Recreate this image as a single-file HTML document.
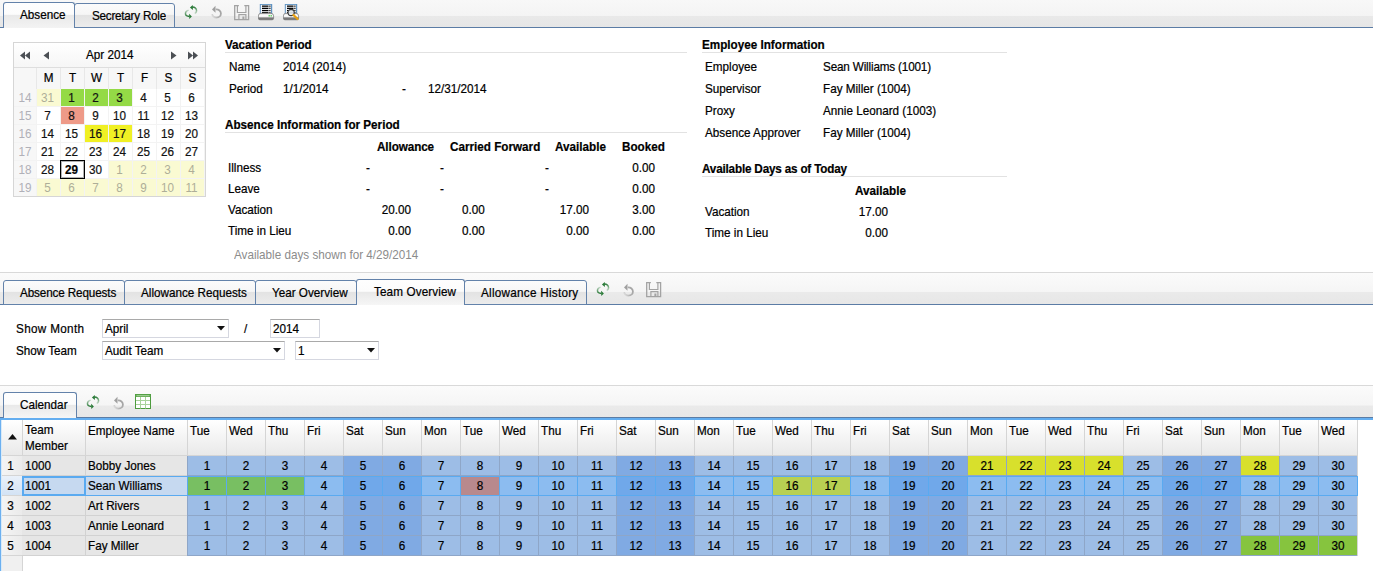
<!DOCTYPE html><html><head><meta charset="utf-8"><style>
*{margin:0;padding:0;box-sizing:border-box}
html,body{width:1373px;height:571px;overflow:hidden;background:#fff}
body{position:relative;font-family:"Liberation Sans",sans-serif;font-size:11.7px;color:#000;-webkit-text-stroke:0.2px currentColor}
.t{position:absolute;white-space:nowrap;line-height:14px;transform-origin:0 11px;transform:scaleY(1.05)}
.bd{font-weight:bold}
.b{position:absolute}
.g{color:#999}
</style></head><body><div class="b" style="left:0px;top:0px;width:1373px;height:27px;background:linear-gradient(#f8f8f8 0,#f4f4f4 58%,#e9e9e9 59%,#e6e6e6 100%)"></div>
<div class="b" style="left:0px;top:27px;width:1373px;height:1px;background:#5b7ca5"></div>
<div class="b" style="left:3px;top:2px;width:72px;height:26px;border:1px solid #6382aa;border-bottom:none;border-radius:3px 3px 0 0;background:linear-gradient(#fefefe 0,#fcfcfc 45%,#e9e9e9 50%,#f3f3f3 100%)"></div>
<div class="t " style="left:20px;top:8px;letter-spacing:0.017px;">Absence</div>
<div class="b" style="left:74px;top:3px;width:101px;height:25px;border:1px solid #6382aa;border-radius:3px 3px 0 0;background:linear-gradient(#fbfbfb 0,#f6f6f6 45%,#e3e3e3 50%,#ececec 100%)"></div>
<div class="t " style="left:92px;top:9px;letter-spacing:-0.238px;">Secretary Role</div>
<svg class="b" style="left:184px;top:4px" width="14" height="16" viewBox="0 0 14 16">
<defs><linearGradient id="ra1" gradientUnits="userSpaceOnUse" x1="9" y1="3" x2="10.5" y2="9.5"><stop offset="0" stop-color="#2a7a38"/><stop offset="1" stop-color="#2a7a38" stop-opacity="0.25"/></linearGradient>
<linearGradient id="rb1" gradientUnits="userSpaceOnUse" x1="4.6" y1="6" x2="4.5" y2="12.4"><stop offset="0" stop-color="#2a7a38" stop-opacity="0.25"/><stop offset="1" stop-color="#2a7a38"/></linearGradient></defs>
<path d="M8.2 3.1 C10.5 3.2 12.4 4.8 12.6 6.8 C12.7 8 12 8.9 10.8 9.6" fill="none" stroke="url(#ra1)" stroke-width="1.5"/>
<path d="M5.9 3.4 L8.8 0.9 L8.9 5.9Z" fill="#2a7a38"/>
<path d="M4.6 6.1 C2.6 6.7 1.2 8.2 1.5 10.2 C1.8 11.6 3.2 12.3 5.4 12.4" fill="none" stroke="url(#rb1)" stroke-width="1.5"/>
<path d="M7.9 12.4 L5.1 9.8 L5.3 15.1Z" fill="#2a7a38"/>
</svg>
<svg class="b" style="left:211px;top:5px" width="12" height="14" viewBox="0 0 12 14">
<defs><linearGradient id="ua2" gradientUnits="userSpaceOnUse" x1="10" y1="5" x2="1" y2="10"><stop offset="0" stop-color="#a2a2a2"/><stop offset="0.6" stop-color="#b0b0b0"/><stop offset="1" stop-color="#d8d8d8"/></linearGradient></defs>
<path d="M4.8 4.4 C7.8 4.2 9.9 6 9.9 8.4 C9.9 10.8 8 12.6 5.4 12.6 C3.1 12.6 1.4 11 1.1 9.2" fill="none" stroke="url(#ua2)" stroke-width="1.8"/>
<path d="M1 4.5 L4.5 0.8 L4.5 7.8Z" fill="#a0a0a0"/>
</svg>
<svg class="b" style="left:234px;top:5px" width="16" height="16" viewBox="0 0 16 16">
<path d="M4.9 0.7 H0.7 V14.6 H14.6 V0.7 H10.3" fill="none" stroke="#a3a3a3" stroke-width="1.3"/>
<path d="M3.4 0.5 V7.5 H11.9 V0.5" fill="none" stroke="#a3a3a3" stroke-width="1.2"/>
<path d="M4.9 14.5 V9.7 H11.9 V14.5" fill="none" stroke="#a3a3a3" stroke-width="1.2"/>
<rect x="8.4" y="11.5" width="2" height="3" fill="#a3a3a3"/>
</svg>
<svg class="b" style="left:258px;top:4px" width="17" height="17" viewBox="0 0 17 17">
<rect x="1.8" y="0" width="12.4" height="10" fill="#5f93c2"/>
<rect x="2.8" y="0.9" width="10.2" height="9" fill="#f6f9fc"/>
<rect x="4" y="1.5" width="6.5" height="1.3" fill="#000"/><rect x="11.3" y="1.5" width="1.2" height="1.3" fill="#000"/>
<rect x="4" y="3.7" width="6.5" height="1.3" fill="#000"/><rect x="11.3" y="3.7" width="1.2" height="1.3" fill="#000"/>
<rect x="4" y="5.9" width="6.5" height="1.3" fill="#000"/><rect x="11.3" y="5.9" width="1.2" height="1.3" fill="#000"/>
<rect x="4" y="8.1" width="6.5" height="1.3" fill="#000"/><rect x="11.3" y="8.1" width="1.2" height="1.3" fill="#000"/>
<defs><linearGradient id="pg258" x1="0" y1="0" x2="0" y2="1"><stop offset="0" stop-color="#c8c8c8"/><stop offset="0.25" stop-color="#ffffff"/><stop offset="0.55" stop-color="#f0f0f0"/><stop offset="0.68" stop-color="#8a8a8a"/><stop offset="1" stop-color="#5e5e5e"/></linearGradient></defs>
<path d="M0.4 12 Q0.4 9.3 2.8 9.3 H13 Q15.6 9.3 15.6 12 V14.3 Q15.6 15.8 14 15.8 H2 Q0.4 15.8 0.4 14.3Z" fill="url(#pg258)" stroke="#757575" stroke-width="0.7"/>
<rect x="10.6" y="11.2" width="1.2" height="1.2" fill="#20c020"/><rect x="12.6" y="11.2" width="1.2" height="1.2" fill="#20c020"/></svg>
<svg class="b" style="left:283px;top:4px" width="17" height="17" viewBox="0 0 17 17">
<rect x="1.8" y="0" width="12.4" height="10" fill="#5f93c2"/>
<rect x="2.8" y="0.9" width="10.2" height="9" fill="#f6f9fc"/>
<rect x="4" y="1.5" width="6.5" height="1.3" fill="#000"/><rect x="11.3" y="1.5" width="1.2" height="1.3" fill="#000"/>
<rect x="4" y="3.7" width="6.5" height="1.3" fill="#000"/><rect x="11.3" y="3.7" width="1.2" height="1.3" fill="#000"/>
<rect x="4" y="5.9" width="6.5" height="1.3" fill="#000"/><rect x="11.3" y="5.9" width="1.2" height="1.3" fill="#000"/>
<rect x="4" y="8.1" width="6.5" height="1.3" fill="#000"/><rect x="11.3" y="8.1" width="1.2" height="1.3" fill="#000"/>
<defs><linearGradient id="pg283" x1="0" y1="0" x2="0" y2="1"><stop offset="0" stop-color="#c8c8c8"/><stop offset="0.25" stop-color="#ffffff"/><stop offset="0.55" stop-color="#f0f0f0"/><stop offset="0.68" stop-color="#8a8a8a"/><stop offset="1" stop-color="#5e5e5e"/></linearGradient></defs>
<path d="M0.4 12 Q0.4 9.3 2.8 9.3 H13 Q15.6 9.3 15.6 12 V14.3 Q15.6 15.8 14 15.8 H2 Q0.4 15.8 0.4 14.3Z" fill="url(#pg283)" stroke="#757575" stroke-width="0.7"/>
<circle cx="8.1" cy="8.5" r="3.1" fill="#e6ebf0" fill-opacity="0.9" stroke="#3c3c3c" stroke-width="1.1"/><path d="M10.5 11 L14.6 15" stroke="#e8a010" stroke-width="2.3" stroke-linecap="round"/></svg>
<div class="b" style="left:13px;top:42px;width:193px;height:155px;border:1px solid #d6d6d6;background:#f3f3f3"></div>
<div class="b" style="left:14px;top:43px;width:191px;height:24px;background:linear-gradient(#fff,#f6f6f6)"></div>
<div class="b" style="left:14px;top:67px;width:191px;height:1px;background:#dedede"></div>
<div class="b" style="left:14px;top:68px;width:191px;height:21px;background:#f7f7f7"></div>
<div class="t " style="left:86px;top:48px;">Apr 2014</div>
<svg class="b" style="left:19px;top:51px" width="12" height="10"><path d="M1 4.5L6 0.5V8.5Z M6 4.5L11 0.5V8.5Z" fill="#4b4f54"/></svg>
<svg class="b" style="left:43px;top:51px" width="8" height="10"><path d="M0.5 4.5L6 0.5V8.5Z" fill="#4b4f54"/></svg>
<svg class="b" style="left:170px;top:51px" width="8" height="10"><path d="M6.5 4.5L1 0.5V8.5Z" fill="#4b4f54"/></svg>
<svg class="b" style="left:187px;top:51px" width="12" height="10"><path d="M11 4.5L6 0.5V8.5Z M6 4.5L1 0.5V8.5Z" fill="#4b4f54"/></svg>
<div class="t " style="left:18.5px;width:60px;text-align:center;top:71px;">M</div>
<div class="t " style="left:42.5px;width:60px;text-align:center;top:71px;">T</div>
<div class="t " style="left:66.5px;width:60px;text-align:center;top:71px;">W</div>
<div class="t " style="left:90.5px;width:60px;text-align:center;top:71px;">T</div>
<div class="t " style="left:114.5px;width:60px;text-align:center;top:71px;">F</div>
<div class="t " style="left:138.5px;width:60px;text-align:center;top:71px;">S</div>
<div class="t " style="left:162.5px;width:60px;text-align:center;top:71px;">S</div>
<div class="b" style="left:36px;top:68px;width:1px;height:21px;background:#e8e8e8"></div>
<div class="b" style="left:60px;top:68px;width:1px;height:21px;background:#e8e8e8"></div>
<div class="b" style="left:84px;top:68px;width:1px;height:21px;background:#e8e8e8"></div>
<div class="b" style="left:108px;top:68px;width:1px;height:21px;background:#e8e8e8"></div>
<div class="b" style="left:132px;top:68px;width:1px;height:21px;background:#e8e8e8"></div>
<div class="b" style="left:156px;top:68px;width:1px;height:21px;background:#e8e8e8"></div>
<div class="b" style="left:180px;top:68px;width:1px;height:21px;background:#e8e8e8"></div>
<div class="b" style="left:14px;top:89px;width:22px;height:17px;background:#f7f7f7"></div>
<div class="t g" style="left:-5.0px;width:60px;text-align:center;top:91px;color:#b0b0b8;-webkit-text-stroke:0">14</div>
<div class="b" style="left:37px;top:89px;width:23px;height:17px;background:#fafad2"></div>
<div class="t " style="left:17.5px;width:60px;text-align:center;top:91px;color:#aeae98;-webkit-text-stroke:0">31</div>
<div class="b" style="left:61px;top:89px;width:23px;height:17px;background:#94da46"></div>
<div class="t " style="left:41.5px;width:60px;text-align:center;top:91px;color:#111">1</div>
<div class="b" style="left:85px;top:89px;width:23px;height:17px;background:#94da46"></div>
<div class="t " style="left:65.5px;width:60px;text-align:center;top:91px;color:#111">2</div>
<div class="b" style="left:109px;top:89px;width:23px;height:17px;background:#94da46"></div>
<div class="t " style="left:89.5px;width:60px;text-align:center;top:91px;color:#111">3</div>
<div class="b" style="left:133px;top:89px;width:23px;height:17px;background:#fff"></div>
<div class="t " style="left:113.5px;width:60px;text-align:center;top:91px;color:#111">4</div>
<div class="b" style="left:157px;top:89px;width:23px;height:17px;background:#fff"></div>
<div class="t " style="left:137.5px;width:60px;text-align:center;top:91px;color:#111">5</div>
<div class="b" style="left:181px;top:89px;width:23px;height:17px;background:#fff"></div>
<div class="t " style="left:161.5px;width:60px;text-align:center;top:91px;color:#111">6</div>
<div class="b" style="left:14px;top:107px;width:22px;height:17px;background:#f7f7f7"></div>
<div class="t g" style="left:-5.0px;width:60px;text-align:center;top:109px;color:#b0b0b8;-webkit-text-stroke:0">15</div>
<div class="b" style="left:37px;top:107px;width:23px;height:17px;background:#fff"></div>
<div class="t " style="left:17.5px;width:60px;text-align:center;top:109px;color:#111">7</div>
<div class="b" style="left:61px;top:107px;width:23px;height:17px;background:#ee9a88"></div>
<div class="t " style="left:41.5px;width:60px;text-align:center;top:109px;color:#111">8</div>
<div class="b" style="left:85px;top:107px;width:23px;height:17px;background:#fff"></div>
<div class="t " style="left:65.5px;width:60px;text-align:center;top:109px;color:#111">9</div>
<div class="b" style="left:109px;top:107px;width:23px;height:17px;background:#fff"></div>
<div class="t " style="left:89.5px;width:60px;text-align:center;top:109px;color:#111">10</div>
<div class="b" style="left:133px;top:107px;width:23px;height:17px;background:#fff"></div>
<div class="t " style="left:113.5px;width:60px;text-align:center;top:109px;color:#111">11</div>
<div class="b" style="left:157px;top:107px;width:23px;height:17px;background:#fff"></div>
<div class="t " style="left:137.5px;width:60px;text-align:center;top:109px;color:#111">12</div>
<div class="b" style="left:181px;top:107px;width:23px;height:17px;background:#fff"></div>
<div class="t " style="left:161.5px;width:60px;text-align:center;top:109px;color:#111">13</div>
<div class="b" style="left:14px;top:125px;width:22px;height:17px;background:#f7f7f7"></div>
<div class="t g" style="left:-5.0px;width:60px;text-align:center;top:127px;color:#b0b0b8;-webkit-text-stroke:0">16</div>
<div class="b" style="left:37px;top:125px;width:23px;height:17px;background:#fff"></div>
<div class="t " style="left:17.5px;width:60px;text-align:center;top:127px;color:#111">14</div>
<div class="b" style="left:61px;top:125px;width:23px;height:17px;background:#fff"></div>
<div class="t " style="left:41.5px;width:60px;text-align:center;top:127px;color:#111">15</div>
<div class="b" style="left:85px;top:125px;width:23px;height:17px;background:#f0f024"></div>
<div class="t " style="left:65.5px;width:60px;text-align:center;top:127px;color:#111">16</div>
<div class="b" style="left:109px;top:125px;width:23px;height:17px;background:#f0f024"></div>
<div class="t " style="left:89.5px;width:60px;text-align:center;top:127px;color:#111">17</div>
<div class="b" style="left:133px;top:125px;width:23px;height:17px;background:#fff"></div>
<div class="t " style="left:113.5px;width:60px;text-align:center;top:127px;color:#111">18</div>
<div class="b" style="left:157px;top:125px;width:23px;height:17px;background:#fff"></div>
<div class="t " style="left:137.5px;width:60px;text-align:center;top:127px;color:#111">19</div>
<div class="b" style="left:181px;top:125px;width:23px;height:17px;background:#fff"></div>
<div class="t " style="left:161.5px;width:60px;text-align:center;top:127px;color:#111">20</div>
<div class="b" style="left:14px;top:143px;width:22px;height:17px;background:#f7f7f7"></div>
<div class="t g" style="left:-5.0px;width:60px;text-align:center;top:145px;color:#b0b0b8;-webkit-text-stroke:0">17</div>
<div class="b" style="left:37px;top:143px;width:23px;height:17px;background:#fff"></div>
<div class="t " style="left:17.5px;width:60px;text-align:center;top:145px;color:#111">21</div>
<div class="b" style="left:61px;top:143px;width:23px;height:17px;background:#fff"></div>
<div class="t " style="left:41.5px;width:60px;text-align:center;top:145px;color:#111">22</div>
<div class="b" style="left:85px;top:143px;width:23px;height:17px;background:#fff"></div>
<div class="t " style="left:65.5px;width:60px;text-align:center;top:145px;color:#111">23</div>
<div class="b" style="left:109px;top:143px;width:23px;height:17px;background:#fff"></div>
<div class="t " style="left:89.5px;width:60px;text-align:center;top:145px;color:#111">24</div>
<div class="b" style="left:133px;top:143px;width:23px;height:17px;background:#fff"></div>
<div class="t " style="left:113.5px;width:60px;text-align:center;top:145px;color:#111">25</div>
<div class="b" style="left:157px;top:143px;width:23px;height:17px;background:#fff"></div>
<div class="t " style="left:137.5px;width:60px;text-align:center;top:145px;color:#111">26</div>
<div class="b" style="left:181px;top:143px;width:23px;height:17px;background:#fff"></div>
<div class="t " style="left:161.5px;width:60px;text-align:center;top:145px;color:#111">27</div>
<div class="b" style="left:14px;top:161px;width:22px;height:17px;background:#f7f7f7"></div>
<div class="t g" style="left:-5.0px;width:60px;text-align:center;top:163px;color:#b0b0b8;-webkit-text-stroke:0">18</div>
<div class="b" style="left:37px;top:161px;width:23px;height:17px;background:#fff"></div>
<div class="t " style="left:17.5px;width:60px;text-align:center;top:163px;color:#111">28</div>
<div class="b" style="left:61px;top:161px;width:23px;height:17px;background:#fff"></div>
<div class="b" style="left:60px;top:160px;width:25px;height:19px;border:1px solid #000;box-shadow:inset 0 0 0 1px rgba(0,0,0,0.3);background:#fff"></div>
<div class="t bd" style="left:41.5px;width:60px;text-align:center;top:163px;">29</div>
<div class="b" style="left:85px;top:161px;width:23px;height:17px;background:#fff"></div>
<div class="t " style="left:65.5px;width:60px;text-align:center;top:163px;color:#111">30</div>
<div class="b" style="left:109px;top:161px;width:23px;height:17px;background:#fafad2"></div>
<div class="t " style="left:89.5px;width:60px;text-align:center;top:163px;color:#aeae98;-webkit-text-stroke:0">1</div>
<div class="b" style="left:133px;top:161px;width:23px;height:17px;background:#fafad2"></div>
<div class="t " style="left:113.5px;width:60px;text-align:center;top:163px;color:#aeae98;-webkit-text-stroke:0">2</div>
<div class="b" style="left:157px;top:161px;width:23px;height:17px;background:#fafad2"></div>
<div class="t " style="left:137.5px;width:60px;text-align:center;top:163px;color:#aeae98;-webkit-text-stroke:0">3</div>
<div class="b" style="left:181px;top:161px;width:23px;height:17px;background:#fafad2"></div>
<div class="t " style="left:161.5px;width:60px;text-align:center;top:163px;color:#aeae98;-webkit-text-stroke:0">4</div>
<div class="b" style="left:14px;top:179px;width:22px;height:17px;background:#f7f7f7"></div>
<div class="t g" style="left:-5.0px;width:60px;text-align:center;top:181px;color:#b0b0b8;-webkit-text-stroke:0">19</div>
<div class="b" style="left:37px;top:179px;width:23px;height:17px;background:#fafad2"></div>
<div class="t " style="left:17.5px;width:60px;text-align:center;top:181px;color:#aeae98;-webkit-text-stroke:0">5</div>
<div class="b" style="left:61px;top:179px;width:23px;height:17px;background:#fafad2"></div>
<div class="t " style="left:41.5px;width:60px;text-align:center;top:181px;color:#aeae98;-webkit-text-stroke:0">6</div>
<div class="b" style="left:85px;top:179px;width:23px;height:17px;background:#fafad2"></div>
<div class="t " style="left:65.5px;width:60px;text-align:center;top:181px;color:#aeae98;-webkit-text-stroke:0">7</div>
<div class="b" style="left:109px;top:179px;width:23px;height:17px;background:#fafad2"></div>
<div class="t " style="left:89.5px;width:60px;text-align:center;top:181px;color:#aeae98;-webkit-text-stroke:0">8</div>
<div class="b" style="left:133px;top:179px;width:23px;height:17px;background:#fafad2"></div>
<div class="t " style="left:113.5px;width:60px;text-align:center;top:181px;color:#aeae98;-webkit-text-stroke:0">9</div>
<div class="b" style="left:157px;top:179px;width:23px;height:17px;background:#fafad2"></div>
<div class="t " style="left:137.5px;width:60px;text-align:center;top:181px;color:#aeae98;-webkit-text-stroke:0">10</div>
<div class="b" style="left:181px;top:179px;width:23px;height:17px;background:#fafad2"></div>
<div class="t " style="left:161.5px;width:60px;text-align:center;top:181px;color:#aeae98;-webkit-text-stroke:0">11</div>
<div class="t bd" style="left:225px;top:38px;letter-spacing:-0.071px;">Vacation Period</div>
<div class="b" style="left:225px;top:52px;width:462px;height:1px;background:#e2e2e2"></div>
<div class="t " style="left:229px;top:60px;">Name</div>
<div class="t " style="left:283px;top:60px;">2014 (2014)</div>
<div class="t " style="left:229px;top:82px;">Period</div>
<div class="t " style="left:283px;top:82px;">1/1/2014</div>
<div class="t " style="left:402px;top:82px;">-</div>
<div class="t " style="left:428px;top:82px;">12/31/2014</div>
<div class="t bd" style="left:225px;top:118px;">Absence Information for Period</div>
<div class="b" style="left:225px;top:132px;width:462px;height:1px;background:#e2e2e2"></div>
<div class="t bd" style="left:377px;top:140px;letter-spacing:-0.087px;">Allowance</div>
<div class="t bd" style="left:450px;top:140px;">Carried Forward</div>
<div class="t bd" style="left:555px;top:140px;">Available</div>
<div class="t bd" style="left:622px;top:140px;">Booked</div>
<div class="t " style="left:228px;top:161px;">Illness</div>
<div class="t " style="left:366px;top:161px;">-</div>
<div class="t " style="left:440px;top:161px;">-</div>
<div class="t " style="left:545px;top:161px;">-</div>
<div class="t " style="right:718px;top:161px;">0.00</div>
<div class="t " style="left:228px;top:182px;">Leave</div>
<div class="t " style="left:366px;top:182px;">-</div>
<div class="t " style="left:440px;top:182px;">-</div>
<div class="t " style="left:545px;top:182px;">-</div>
<div class="t " style="right:718px;top:182px;">0.00</div>
<div class="t " style="left:228px;top:203px;">Vacation</div>
<div class="t " style="right:962px;top:203px;">20.00</div>
<div class="t " style="left:462px;top:203px;">0.00</div>
<div class="t " style="right:784px;top:203px;">17.00</div>
<div class="t " style="right:718px;top:203px;">3.00</div>
<div class="t " style="left:228px;top:224px;">Time in Lieu</div>
<div class="t " style="right:962px;top:224px;">0.00</div>
<div class="t " style="left:462px;top:224px;">0.00</div>
<div class="t " style="right:784px;top:224px;">0.00</div>
<div class="t " style="right:718px;top:224px;">0.00</div>
<div class="t " style="left:234px;top:248px;color:#8c8c8c;-webkit-text-stroke:0">Available days shown for 4/29/2014</div>
<div class="t bd" style="left:702px;top:38px;">Employee Information</div>
<div class="b" style="left:702px;top:52px;width:305px;height:1px;background:#e2e2e2"></div>
<div class="t " style="left:705px;top:60px;">Employee</div>
<div class="t " style="left:823px;top:60px;letter-spacing:-0.158px;">Sean Williams (1001)</div>
<div class="t " style="left:705px;top:82px;">Supervisor</div>
<div class="t " style="left:823px;top:82px;">Fay Miller (1004)</div>
<div class="t " style="left:705px;top:104px;">Proxy</div>
<div class="t " style="left:823px;top:104px;">Annie Leonard (1003)</div>
<div class="t " style="left:705px;top:126px;">Absence Approver</div>
<div class="t " style="left:823px;top:126px;">Fay Miller (1004)</div>
<div class="t bd" style="left:702px;top:162px;letter-spacing:-0.176px;">Available Days as of Today</div>
<div class="b" style="left:702px;top:176px;width:305px;height:1px;background:#e2e2e2"></div>
<div class="t bd" style="left:855px;top:184px;">Available</div>
<div class="t " style="left:705px;top:205px;">Vacation</div>
<div class="t " style="right:485px;top:205px;">17.00</div>
<div class="t " style="left:705px;top:226px;">Time in Lieu</div>
<div class="t " style="right:485px;top:226px;">0.00</div>
<div class="b" style="left:0px;top:272px;width:1373px;height:1px;background:#d9d9d9"></div>
<div class="b" style="left:0px;top:273px;width:1373px;height:31px;background:linear-gradient(#fbfbfb 0,#f5f5f5 60%,#eaeaea 62%,#e7e7e7 100%)"></div>
<div class="b" style="left:0px;top:304px;width:1373px;height:1px;background:#5b7ca5"></div>
<div class="b" style="left:3px;top:280px;width:122px;height:25px;border:1px solid #6382aa;border-radius:3px 3px 0 0;background:linear-gradient(#fbfbfb 0,#f6f6f6 45%,#e3e3e3 50%,#ececec 100%)"></div>
<div class="t " style="left:20px;top:286px;letter-spacing:-0.12px;">Absence Requests</div>
<div class="b" style="left:124px;top:280px;width:132px;height:25px;border:1px solid #6382aa;border-radius:3px 3px 0 0;background:linear-gradient(#fbfbfb 0,#f6f6f6 45%,#e3e3e3 50%,#ececec 100%)"></div>
<div class="t " style="left:141px;top:286px;">Allowance Requests</div>
<div class="b" style="left:255px;top:280px;width:102px;height:25px;border:1px solid #6382aa;border-radius:3px 3px 0 0;background:linear-gradient(#fbfbfb 0,#f6f6f6 45%,#e3e3e3 50%,#ececec 100%)"></div>
<div class="t " style="left:272px;top:286px;">Year Overview</div>
<div class="b" style="left:356px;top:279px;width:109px;height:26px;border:1px solid #6382aa;border-bottom:none;border-radius:3px 3px 0 0;background:linear-gradient(#fefefe 0,#fcfcfc 45%,#e9e9e9 50%,#f6f6f6 100%)"></div>
<div class="t " style="left:374px;top:285px;letter-spacing:0.125px;">Team Overview</div>
<div class="b" style="left:464px;top:280px;width:123px;height:25px;border:1px solid #6382aa;border-radius:3px 3px 0 0;background:linear-gradient(#fbfbfb 0,#f6f6f6 45%,#e3e3e3 50%,#ececec 100%)"></div>
<div class="t " style="left:481px;top:286px;letter-spacing:0.269px;">Allowance History</div>
<svg class="b" style="left:596px;top:281px" width="14" height="16" viewBox="0 0 14 16">
<defs><linearGradient id="ra3" gradientUnits="userSpaceOnUse" x1="9" y1="3" x2="10.5" y2="9.5"><stop offset="0" stop-color="#2a7a38"/><stop offset="1" stop-color="#2a7a38" stop-opacity="0.25"/></linearGradient>
<linearGradient id="rb3" gradientUnits="userSpaceOnUse" x1="4.6" y1="6" x2="4.5" y2="12.4"><stop offset="0" stop-color="#2a7a38" stop-opacity="0.25"/><stop offset="1" stop-color="#2a7a38"/></linearGradient></defs>
<path d="M8.2 3.1 C10.5 3.2 12.4 4.8 12.6 6.8 C12.7 8 12 8.9 10.8 9.6" fill="none" stroke="url(#ra3)" stroke-width="1.5"/>
<path d="M5.9 3.4 L8.8 0.9 L8.9 5.9Z" fill="#2a7a38"/>
<path d="M4.6 6.1 C2.6 6.7 1.2 8.2 1.5 10.2 C1.8 11.6 3.2 12.3 5.4 12.4" fill="none" stroke="url(#rb3)" stroke-width="1.5"/>
<path d="M7.9 12.4 L5.1 9.8 L5.3 15.1Z" fill="#2a7a38"/>
</svg>
<svg class="b" style="left:623px;top:283px" width="12" height="14" viewBox="0 0 12 14">
<defs><linearGradient id="ua4" gradientUnits="userSpaceOnUse" x1="10" y1="5" x2="1" y2="10"><stop offset="0" stop-color="#a2a2a2"/><stop offset="0.6" stop-color="#b0b0b0"/><stop offset="1" stop-color="#d8d8d8"/></linearGradient></defs>
<path d="M4.8 4.4 C7.8 4.2 9.9 6 9.9 8.4 C9.9 10.8 8 12.6 5.4 12.6 C3.1 12.6 1.4 11 1.1 9.2" fill="none" stroke="url(#ua4)" stroke-width="1.8"/>
<path d="M1 4.5 L4.5 0.8 L4.5 7.8Z" fill="#a0a0a0"/>
</svg>
<svg class="b" style="left:646px;top:282px" width="16" height="16" viewBox="0 0 16 16">
<path d="M4.9 0.7 H0.7 V14.6 H14.6 V0.7 H10.3" fill="none" stroke="#a3a3a3" stroke-width="1.3"/>
<path d="M3.4 0.5 V7.5 H11.9 V0.5" fill="none" stroke="#a3a3a3" stroke-width="1.2"/>
<path d="M4.9 14.5 V9.7 H11.9 V14.5" fill="none" stroke="#a3a3a3" stroke-width="1.2"/>
<rect x="8.4" y="11.5" width="2" height="3" fill="#a3a3a3"/>
</svg>
<div class="t " style="left:16px;top:322px;letter-spacing:0.333px;">Show Month</div>
<div class="t " style="left:16px;top:344px;">Show Team</div>
<div class="b" style="left:102px;top:319px;width:127px;height:19px;border:1px solid #d5d7e0;border-top-color:#a9a9a9;background:#fff"></div>
<div class="t " style="left:105px;top:322px;">April</div>
<svg class="b" style="left:217px;top:326px" width="8" height="5"><path d="M0 0H8L4 4.5Z" fill="#111"/></svg>
<div class="t " style="left:244px;top:322px;">/</div>
<div class="b" style="left:270px;top:319px;width:50px;height:19px;border:1px solid #d5d7e0;border-top-color:#a9a9a9;background:#fff"></div>
<div class="t " style="left:273px;top:322px;">2014</div>
<div class="b" style="left:102px;top:341px;width:183px;height:19px;border:1px solid #d5d7e0;border-top-color:#a9a9a9;background:#fff"></div>
<div class="t " style="left:105px;top:344px;">Audit Team</div>
<svg class="b" style="left:273px;top:348px" width="8" height="5"><path d="M0 0H8L4 4.5Z" fill="#111"/></svg>
<div class="b" style="left:295px;top:341px;width:84px;height:19px;border:1px solid #d5d7e0;border-top-color:#a9a9a9;background:#fff"></div>
<div class="t " style="left:298px;top:344px;">1</div>
<svg class="b" style="left:367px;top:348px" width="8" height="5"><path d="M0 0H8L4 4.5Z" fill="#111"/></svg>
<div class="b" style="left:0px;top:385px;width:1373px;height:1px;background:#d9d9d9"></div>
<div class="b" style="left:0px;top:386px;width:1373px;height:32px;background:linear-gradient(#fbfbfb 0,#f5f5f5 60%,#eaeaea 62%,#e7e7e7 100%)"></div>
<div class="b" style="left:3px;top:392px;width:74px;height:26px;border:1px solid #6382aa;border-bottom:none;border-radius:3px 3px 0 0;background:linear-gradient(#fefefe 0,#fcfcfc 45%,#e9e9e9 50%,#f6f6f6 100%)"></div>
<div class="t " style="left:20px;top:398px;letter-spacing:0.014px;">Calendar</div>
<svg class="b" style="left:86px;top:394px" width="14" height="16" viewBox="0 0 14 16">
<defs><linearGradient id="ra5" gradientUnits="userSpaceOnUse" x1="9" y1="3" x2="10.5" y2="9.5"><stop offset="0" stop-color="#2a7a38"/><stop offset="1" stop-color="#2a7a38" stop-opacity="0.25"/></linearGradient>
<linearGradient id="rb5" gradientUnits="userSpaceOnUse" x1="4.6" y1="6" x2="4.5" y2="12.4"><stop offset="0" stop-color="#2a7a38" stop-opacity="0.25"/><stop offset="1" stop-color="#2a7a38"/></linearGradient></defs>
<path d="M8.2 3.1 C10.5 3.2 12.4 4.8 12.6 6.8 C12.7 8 12 8.9 10.8 9.6" fill="none" stroke="url(#ra5)" stroke-width="1.5"/>
<path d="M5.9 3.4 L8.8 0.9 L8.9 5.9Z" fill="#2a7a38"/>
<path d="M4.6 6.1 C2.6 6.7 1.2 8.2 1.5 10.2 C1.8 11.6 3.2 12.3 5.4 12.4" fill="none" stroke="url(#rb5)" stroke-width="1.5"/>
<path d="M7.9 12.4 L5.1 9.8 L5.3 15.1Z" fill="#2a7a38"/>
</svg>
<svg class="b" style="left:113px;top:396px" width="12" height="14" viewBox="0 0 12 14">
<defs><linearGradient id="ua6" gradientUnits="userSpaceOnUse" x1="10" y1="5" x2="1" y2="10"><stop offset="0" stop-color="#a2a2a2"/><stop offset="0.6" stop-color="#b0b0b0"/><stop offset="1" stop-color="#d8d8d8"/></linearGradient></defs>
<path d="M4.8 4.4 C7.8 4.2 9.9 6 9.9 8.4 C9.9 10.8 8 12.6 5.4 12.6 C3.1 12.6 1.4 11 1.1 9.2" fill="none" stroke="url(#ua6)" stroke-width="1.8"/>
<path d="M1 4.5 L4.5 0.8 L4.5 7.8Z" fill="#a0a0a0"/>
</svg>
<svg class="b" style="left:135px;top:394px" width="16" height="15" viewBox="0 0 16 15">
<rect x="0.5" y="0.5" width="15" height="14" fill="#fff" stroke="#4d9b3e" stroke-width="1"/>
<rect x="0.5" y="0.5" width="15" height="2.5" fill="#5aa64a"/>
<rect x="1.5" y="1.3" width="13" height="0.9" fill="#b8dcae"/>
<path d="M5.5 3 V14.5 M10.5 3 V14.5 M1 6.5 H15 M1 10.5 H15" stroke="#a9d29c" stroke-width="1"/>
</svg>
<div class="b" style="left:0px;top:417px;width:3px;height:1px;background:#5b7ca5"></div>
<div class="b" style="left:77px;top:417px;width:1296px;height:1px;background:#5b7ca5"></div>
<div class="b" style="left:0px;top:418px;width:1373px;height:2px;background:#64aef0"></div>
<div class="b" style="left:0px;top:420px;width:1px;height:151px;background:#6cb0f0"></div>
<div class="b" style="left:1px;top:420px;width:1px;height:151px;background:#d8eaf8"></div>
<div class="b" style="left:2px;top:420px;width:1355px;height:35px;background:linear-gradient(#ffffff,#e9e9e9)"></div>
<div class="b" style="left:2px;top:455px;width:1355px;height:1px;background:#d5d5d5"></div>
<div class="b" style="left:22px;top:420px;width:1px;height:136px;background:#d5d5d5"></div>
<div class="b" style="left:85px;top:420px;width:1px;height:136px;background:#d5d5d5"></div>
<div class="b" style="left:187px;top:420px;width:1px;height:136px;background:#d5d5d5"></div>
<div class="b" style="left:226px;top:420px;width:1px;height:136px;background:#d5d5d5"></div>
<div class="b" style="left:265px;top:420px;width:1px;height:136px;background:#d5d5d5"></div>
<div class="b" style="left:304px;top:420px;width:1px;height:136px;background:#d5d5d5"></div>
<div class="b" style="left:343px;top:420px;width:1px;height:136px;background:#d5d5d5"></div>
<div class="b" style="left:382px;top:420px;width:1px;height:136px;background:#d5d5d5"></div>
<div class="b" style="left:421px;top:420px;width:1px;height:136px;background:#d5d5d5"></div>
<div class="b" style="left:460px;top:420px;width:1px;height:136px;background:#d5d5d5"></div>
<div class="b" style="left:499px;top:420px;width:1px;height:136px;background:#d5d5d5"></div>
<div class="b" style="left:538px;top:420px;width:1px;height:136px;background:#d5d5d5"></div>
<div class="b" style="left:577px;top:420px;width:1px;height:136px;background:#d5d5d5"></div>
<div class="b" style="left:616px;top:420px;width:1px;height:136px;background:#d5d5d5"></div>
<div class="b" style="left:655px;top:420px;width:1px;height:136px;background:#d5d5d5"></div>
<div class="b" style="left:694px;top:420px;width:1px;height:136px;background:#d5d5d5"></div>
<div class="b" style="left:733px;top:420px;width:1px;height:136px;background:#d5d5d5"></div>
<div class="b" style="left:772px;top:420px;width:1px;height:136px;background:#d5d5d5"></div>
<div class="b" style="left:811px;top:420px;width:1px;height:136px;background:#d5d5d5"></div>
<div class="b" style="left:850px;top:420px;width:1px;height:136px;background:#d5d5d5"></div>
<div class="b" style="left:889px;top:420px;width:1px;height:136px;background:#d5d5d5"></div>
<div class="b" style="left:928px;top:420px;width:1px;height:136px;background:#d5d5d5"></div>
<div class="b" style="left:967px;top:420px;width:1px;height:136px;background:#d5d5d5"></div>
<div class="b" style="left:1006px;top:420px;width:1px;height:136px;background:#d5d5d5"></div>
<div class="b" style="left:1045px;top:420px;width:1px;height:136px;background:#d5d5d5"></div>
<div class="b" style="left:1084px;top:420px;width:1px;height:136px;background:#d5d5d5"></div>
<div class="b" style="left:1123px;top:420px;width:1px;height:136px;background:#d5d5d5"></div>
<div class="b" style="left:1162px;top:420px;width:1px;height:136px;background:#d5d5d5"></div>
<div class="b" style="left:1201px;top:420px;width:1px;height:136px;background:#d5d5d5"></div>
<div class="b" style="left:1240px;top:420px;width:1px;height:136px;background:#d5d5d5"></div>
<div class="b" style="left:1279px;top:420px;width:1px;height:136px;background:#d5d5d5"></div>
<div class="b" style="left:1318px;top:420px;width:1px;height:136px;background:#d5d5d5"></div>
<div class="b" style="left:1357px;top:420px;width:1px;height:136px;background:#d5d5d5"></div>
<svg class="b" style="left:8px;top:434px" width="9" height="6"><path d="M0 5.5H9L4.5 0Z" fill="#111"/></svg>
<div class="t " style="left:25px;top:423px;">Team</div>
<div class="t " style="left:25px;top:439px;">Member</div>
<div class="t " style="left:88px;top:424px;">Employee Name</div>
<div class="t " style="left:190px;top:424px;">Tue</div>
<div class="t " style="left:229px;top:424px;">Wed</div>
<div class="t " style="left:268px;top:424px;">Thu</div>
<div class="t " style="left:307px;top:424px;">Fri</div>
<div class="t " style="left:346px;top:424px;">Sat</div>
<div class="t " style="left:385px;top:424px;">Sun</div>
<div class="t " style="left:424px;top:424px;">Mon</div>
<div class="t " style="left:463px;top:424px;">Tue</div>
<div class="t " style="left:502px;top:424px;">Wed</div>
<div class="t " style="left:541px;top:424px;">Thu</div>
<div class="t " style="left:580px;top:424px;">Fri</div>
<div class="t " style="left:619px;top:424px;">Sat</div>
<div class="t " style="left:658px;top:424px;">Sun</div>
<div class="t " style="left:697px;top:424px;">Mon</div>
<div class="t " style="left:736px;top:424px;">Tue</div>
<div class="t " style="left:775px;top:424px;">Wed</div>
<div class="t " style="left:814px;top:424px;">Thu</div>
<div class="t " style="left:853px;top:424px;">Fri</div>
<div class="t " style="left:892px;top:424px;">Sat</div>
<div class="t " style="left:931px;top:424px;">Sun</div>
<div class="t " style="left:970px;top:424px;">Mon</div>
<div class="t " style="left:1009px;top:424px;">Tue</div>
<div class="t " style="left:1048px;top:424px;">Wed</div>
<div class="t " style="left:1087px;top:424px;">Thu</div>
<div class="t " style="left:1126px;top:424px;">Fri</div>
<div class="t " style="left:1165px;top:424px;">Sat</div>
<div class="t " style="left:1204px;top:424px;">Sun</div>
<div class="t " style="left:1243px;top:424px;">Mon</div>
<div class="t " style="left:1282px;top:424px;">Tue</div>
<div class="t " style="left:1321px;top:424px;">Wed</div>
<div class="b" style="left:2px;top:456px;width:20px;height:20px;background:linear-gradient(90deg,#f4f4f4,#ebebeb)"></div>
<div class="b" style="left:2px;top:475px;width:20px;height:1px;background:#d5d5d5"></div>
<div class="t " style="left:0.5px;width:20px;text-align:center;top:459px;">1</div>
<div class="b" style="left:22px;top:456px;width:165px;height:20px;background:#e6e6e6"></div>
<div class="b" style="left:22px;top:475px;width:165px;height:1px;background:#d2d2d2"></div>
<div class="b" style="left:85px;top:456px;width:1px;height:20px;background:#d2d2d2"></div>
<div class="t " style="left:25px;top:459px;">1000</div>
<div class="t " style="left:88px;top:459px;">Bobby Jones</div>
<div class="b" style="left:187px;top:456px;width:39px;height:20px;background:#9dbde6;border-left:1px solid #8ea6c8;border-bottom:1px solid #8ea6c8"></div>
<div class="t " style="left:187.5px;width:39px;text-align:center;top:459px;">1</div>
<div class="b" style="left:226px;top:456px;width:39px;height:20px;background:#9dbde6;border-left:1px solid #8ea6c8;border-bottom:1px solid #8ea6c8"></div>
<div class="t " style="left:226.5px;width:39px;text-align:center;top:459px;">2</div>
<div class="b" style="left:265px;top:456px;width:39px;height:20px;background:#9dbde6;border-left:1px solid #8ea6c8;border-bottom:1px solid #8ea6c8"></div>
<div class="t " style="left:265.5px;width:39px;text-align:center;top:459px;">3</div>
<div class="b" style="left:304px;top:456px;width:39px;height:20px;background:#9dbde6;border-left:1px solid #8ea6c8;border-bottom:1px solid #8ea6c8"></div>
<div class="t " style="left:304.5px;width:39px;text-align:center;top:459px;">4</div>
<div class="b" style="left:343px;top:456px;width:39px;height:20px;background:#80aae3;border-left:1px solid #8ea6c8;border-bottom:1px solid #8ea6c8"></div>
<div class="t " style="left:343.5px;width:39px;text-align:center;top:459px;">5</div>
<div class="b" style="left:382px;top:456px;width:39px;height:20px;background:#80aae3;border-left:1px solid #8ea6c8;border-bottom:1px solid #8ea6c8"></div>
<div class="t " style="left:382.5px;width:39px;text-align:center;top:459px;">6</div>
<div class="b" style="left:421px;top:456px;width:39px;height:20px;background:#9dbde6;border-left:1px solid #8ea6c8;border-bottom:1px solid #8ea6c8"></div>
<div class="t " style="left:421.5px;width:39px;text-align:center;top:459px;">7</div>
<div class="b" style="left:460px;top:456px;width:39px;height:20px;background:#9dbde6;border-left:1px solid #8ea6c8;border-bottom:1px solid #8ea6c8"></div>
<div class="t " style="left:460.5px;width:39px;text-align:center;top:459px;">8</div>
<div class="b" style="left:499px;top:456px;width:39px;height:20px;background:#9dbde6;border-left:1px solid #8ea6c8;border-bottom:1px solid #8ea6c8"></div>
<div class="t " style="left:499.5px;width:39px;text-align:center;top:459px;">9</div>
<div class="b" style="left:538px;top:456px;width:39px;height:20px;background:#9dbde6;border-left:1px solid #8ea6c8;border-bottom:1px solid #8ea6c8"></div>
<div class="t " style="left:538.5px;width:39px;text-align:center;top:459px;">10</div>
<div class="b" style="left:577px;top:456px;width:39px;height:20px;background:#9dbde6;border-left:1px solid #8ea6c8;border-bottom:1px solid #8ea6c8"></div>
<div class="t " style="left:577.5px;width:39px;text-align:center;top:459px;">11</div>
<div class="b" style="left:616px;top:456px;width:39px;height:20px;background:#80aae3;border-left:1px solid #8ea6c8;border-bottom:1px solid #8ea6c8"></div>
<div class="t " style="left:616.5px;width:39px;text-align:center;top:459px;">12</div>
<div class="b" style="left:655px;top:456px;width:39px;height:20px;background:#80aae3;border-left:1px solid #8ea6c8;border-bottom:1px solid #8ea6c8"></div>
<div class="t " style="left:655.5px;width:39px;text-align:center;top:459px;">13</div>
<div class="b" style="left:694px;top:456px;width:39px;height:20px;background:#9dbde6;border-left:1px solid #8ea6c8;border-bottom:1px solid #8ea6c8"></div>
<div class="t " style="left:694.5px;width:39px;text-align:center;top:459px;">14</div>
<div class="b" style="left:733px;top:456px;width:39px;height:20px;background:#9dbde6;border-left:1px solid #8ea6c8;border-bottom:1px solid #8ea6c8"></div>
<div class="t " style="left:733.5px;width:39px;text-align:center;top:459px;">15</div>
<div class="b" style="left:772px;top:456px;width:39px;height:20px;background:#9dbde6;border-left:1px solid #8ea6c8;border-bottom:1px solid #8ea6c8"></div>
<div class="t " style="left:772.5px;width:39px;text-align:center;top:459px;">16</div>
<div class="b" style="left:811px;top:456px;width:39px;height:20px;background:#9dbde6;border-left:1px solid #8ea6c8;border-bottom:1px solid #8ea6c8"></div>
<div class="t " style="left:811.5px;width:39px;text-align:center;top:459px;">17</div>
<div class="b" style="left:850px;top:456px;width:39px;height:20px;background:#9dbde6;border-left:1px solid #8ea6c8;border-bottom:1px solid #8ea6c8"></div>
<div class="t " style="left:850.5px;width:39px;text-align:center;top:459px;">18</div>
<div class="b" style="left:889px;top:456px;width:39px;height:20px;background:#80aae3;border-left:1px solid #8ea6c8;border-bottom:1px solid #8ea6c8"></div>
<div class="t " style="left:889.5px;width:39px;text-align:center;top:459px;">19</div>
<div class="b" style="left:928px;top:456px;width:39px;height:20px;background:#80aae3;border-left:1px solid #8ea6c8;border-bottom:1px solid #8ea6c8"></div>
<div class="t " style="left:928.5px;width:39px;text-align:center;top:459px;">20</div>
<div class="b" style="left:967px;top:456px;width:39px;height:20px;background:#d8e02c;border-left:1px solid #8ea6c8;border-bottom:1px solid #8ea6c8"></div>
<div class="t " style="left:967.5px;width:39px;text-align:center;top:459px;">21</div>
<div class="b" style="left:1006px;top:456px;width:39px;height:20px;background:#d8e02c;border-left:1px solid #8ea6c8;border-bottom:1px solid #8ea6c8"></div>
<div class="t " style="left:1006.5px;width:39px;text-align:center;top:459px;">22</div>
<div class="b" style="left:1045px;top:456px;width:39px;height:20px;background:#d8e02c;border-left:1px solid #8ea6c8;border-bottom:1px solid #8ea6c8"></div>
<div class="t " style="left:1045.5px;width:39px;text-align:center;top:459px;">23</div>
<div class="b" style="left:1084px;top:456px;width:39px;height:20px;background:#d8e02c;border-left:1px solid #8ea6c8;border-bottom:1px solid #8ea6c8"></div>
<div class="t " style="left:1084.5px;width:39px;text-align:center;top:459px;">24</div>
<div class="b" style="left:1123px;top:456px;width:39px;height:20px;background:#9dbde6;border-left:1px solid #8ea6c8;border-bottom:1px solid #8ea6c8"></div>
<div class="t " style="left:1123.5px;width:39px;text-align:center;top:459px;">25</div>
<div class="b" style="left:1162px;top:456px;width:39px;height:20px;background:#80aae3;border-left:1px solid #8ea6c8;border-bottom:1px solid #8ea6c8"></div>
<div class="t " style="left:1162.5px;width:39px;text-align:center;top:459px;">26</div>
<div class="b" style="left:1201px;top:456px;width:39px;height:20px;background:#80aae3;border-left:1px solid #8ea6c8;border-bottom:1px solid #8ea6c8"></div>
<div class="t " style="left:1201.5px;width:39px;text-align:center;top:459px;">27</div>
<div class="b" style="left:1240px;top:456px;width:39px;height:20px;background:#d8e02c;border-left:1px solid #8ea6c8;border-bottom:1px solid #8ea6c8"></div>
<div class="t " style="left:1240.5px;width:39px;text-align:center;top:459px;">28</div>
<div class="b" style="left:1279px;top:456px;width:39px;height:20px;background:#9dbde6;border-left:1px solid #8ea6c8;border-bottom:1px solid #8ea6c8"></div>
<div class="t " style="left:1279.5px;width:39px;text-align:center;top:459px;">29</div>
<div class="b" style="left:1318px;top:456px;width:39px;height:20px;background:#9dbde6;border-left:1px solid #8ea6c8;border-bottom:1px solid #8ea6c8"></div>
<div class="t " style="left:1318.5px;width:39px;text-align:center;top:459px;">30</div>
<div class="b" style="left:2px;top:476px;width:20px;height:20px;background:linear-gradient(#eaf1fa,#d2e2f4)"></div>
<div class="b" style="left:2px;top:495px;width:20px;height:1px;background:#d5d5d5"></div>
<div class="t " style="left:0.5px;width:20px;text-align:center;top:479px;">2</div>
<div class="b" style="left:22px;top:476px;width:165px;height:20px;background:#c6d9f0"></div>
<div class="b" style="left:22px;top:495px;width:165px;height:1px;background:#d2d2d2"></div>
<div class="b" style="left:85px;top:476px;width:1px;height:20px;background:#d2d2d2"></div>
<div class="t " style="left:25px;top:479px;">1001</div>
<div class="t " style="left:88px;top:479px;">Sean Williams</div>
<div class="b" style="left:187px;top:476px;width:39px;height:20px;background:#78bf62;border-left:1px solid #5aaaf0;border-bottom:1px solid #5aaaf0"></div>
<div class="t " style="left:187.5px;width:39px;text-align:center;top:479px;">1</div>
<div class="b" style="left:226px;top:476px;width:39px;height:20px;background:#78bf62;border-left:1px solid #5aaaf0;border-bottom:1px solid #5aaaf0"></div>
<div class="t " style="left:226.5px;width:39px;text-align:center;top:479px;">2</div>
<div class="b" style="left:265px;top:476px;width:39px;height:20px;background:#78bf62;border-left:1px solid #5aaaf0;border-bottom:1px solid #5aaaf0"></div>
<div class="t " style="left:265.5px;width:39px;text-align:center;top:479px;">3</div>
<div class="b" style="left:304px;top:476px;width:39px;height:20px;background:#8cbcf0;border-left:1px solid #5aaaf0;border-bottom:1px solid #5aaaf0"></div>
<div class="t " style="left:304.5px;width:39px;text-align:center;top:479px;">4</div>
<div class="b" style="left:343px;top:476px;width:39px;height:20px;background:#70a8ea;border-left:1px solid #5aaaf0;border-bottom:1px solid #5aaaf0"></div>
<div class="t " style="left:343.5px;width:39px;text-align:center;top:479px;">5</div>
<div class="b" style="left:382px;top:476px;width:39px;height:20px;background:#70a8ea;border-left:1px solid #5aaaf0;border-bottom:1px solid #5aaaf0"></div>
<div class="t " style="left:382.5px;width:39px;text-align:center;top:479px;">6</div>
<div class="b" style="left:421px;top:476px;width:39px;height:20px;background:#8cbcf0;border-left:1px solid #5aaaf0;border-bottom:1px solid #5aaaf0"></div>
<div class="t " style="left:421.5px;width:39px;text-align:center;top:479px;">7</div>
<div class="b" style="left:460px;top:476px;width:39px;height:20px;background:#b8898d;border-left:1px solid #5aaaf0;border-bottom:1px solid #5aaaf0"></div>
<div class="t " style="left:460.5px;width:39px;text-align:center;top:479px;">8</div>
<div class="b" style="left:499px;top:476px;width:39px;height:20px;background:#8cbcf0;border-left:1px solid #5aaaf0;border-bottom:1px solid #5aaaf0"></div>
<div class="t " style="left:499.5px;width:39px;text-align:center;top:479px;">9</div>
<div class="b" style="left:538px;top:476px;width:39px;height:20px;background:#8cbcf0;border-left:1px solid #5aaaf0;border-bottom:1px solid #5aaaf0"></div>
<div class="t " style="left:538.5px;width:39px;text-align:center;top:479px;">10</div>
<div class="b" style="left:577px;top:476px;width:39px;height:20px;background:#8cbcf0;border-left:1px solid #5aaaf0;border-bottom:1px solid #5aaaf0"></div>
<div class="t " style="left:577.5px;width:39px;text-align:center;top:479px;">11</div>
<div class="b" style="left:616px;top:476px;width:39px;height:20px;background:#70a8ea;border-left:1px solid #5aaaf0;border-bottom:1px solid #5aaaf0"></div>
<div class="t " style="left:616.5px;width:39px;text-align:center;top:479px;">12</div>
<div class="b" style="left:655px;top:476px;width:39px;height:20px;background:#70a8ea;border-left:1px solid #5aaaf0;border-bottom:1px solid #5aaaf0"></div>
<div class="t " style="left:655.5px;width:39px;text-align:center;top:479px;">13</div>
<div class="b" style="left:694px;top:476px;width:39px;height:20px;background:#8cbcf0;border-left:1px solid #5aaaf0;border-bottom:1px solid #5aaaf0"></div>
<div class="t " style="left:694.5px;width:39px;text-align:center;top:479px;">14</div>
<div class="b" style="left:733px;top:476px;width:39px;height:20px;background:#8cbcf0;border-left:1px solid #5aaaf0;border-bottom:1px solid #5aaaf0"></div>
<div class="t " style="left:733.5px;width:39px;text-align:center;top:479px;">15</div>
<div class="b" style="left:772px;top:476px;width:39px;height:20px;background:#b8d052;border-left:1px solid #5aaaf0;border-bottom:1px solid #5aaaf0"></div>
<div class="t " style="left:772.5px;width:39px;text-align:center;top:479px;">16</div>
<div class="b" style="left:811px;top:476px;width:39px;height:20px;background:#b8d052;border-left:1px solid #5aaaf0;border-bottom:1px solid #5aaaf0"></div>
<div class="t " style="left:811.5px;width:39px;text-align:center;top:479px;">17</div>
<div class="b" style="left:850px;top:476px;width:39px;height:20px;background:#8cbcf0;border-left:1px solid #5aaaf0;border-bottom:1px solid #5aaaf0"></div>
<div class="t " style="left:850.5px;width:39px;text-align:center;top:479px;">18</div>
<div class="b" style="left:889px;top:476px;width:39px;height:20px;background:#70a8ea;border-left:1px solid #5aaaf0;border-bottom:1px solid #5aaaf0"></div>
<div class="t " style="left:889.5px;width:39px;text-align:center;top:479px;">19</div>
<div class="b" style="left:928px;top:476px;width:39px;height:20px;background:#70a8ea;border-left:1px solid #5aaaf0;border-bottom:1px solid #5aaaf0"></div>
<div class="t " style="left:928.5px;width:39px;text-align:center;top:479px;">20</div>
<div class="b" style="left:967px;top:476px;width:39px;height:20px;background:#8cbcf0;border-left:1px solid #5aaaf0;border-bottom:1px solid #5aaaf0"></div>
<div class="t " style="left:967.5px;width:39px;text-align:center;top:479px;">21</div>
<div class="b" style="left:1006px;top:476px;width:39px;height:20px;background:#8cbcf0;border-left:1px solid #5aaaf0;border-bottom:1px solid #5aaaf0"></div>
<div class="t " style="left:1006.5px;width:39px;text-align:center;top:479px;">22</div>
<div class="b" style="left:1045px;top:476px;width:39px;height:20px;background:#8cbcf0;border-left:1px solid #5aaaf0;border-bottom:1px solid #5aaaf0"></div>
<div class="t " style="left:1045.5px;width:39px;text-align:center;top:479px;">23</div>
<div class="b" style="left:1084px;top:476px;width:39px;height:20px;background:#8cbcf0;border-left:1px solid #5aaaf0;border-bottom:1px solid #5aaaf0"></div>
<div class="t " style="left:1084.5px;width:39px;text-align:center;top:479px;">24</div>
<div class="b" style="left:1123px;top:476px;width:39px;height:20px;background:#8cbcf0;border-left:1px solid #5aaaf0;border-bottom:1px solid #5aaaf0"></div>
<div class="t " style="left:1123.5px;width:39px;text-align:center;top:479px;">25</div>
<div class="b" style="left:1162px;top:476px;width:39px;height:20px;background:#70a8ea;border-left:1px solid #5aaaf0;border-bottom:1px solid #5aaaf0"></div>
<div class="t " style="left:1162.5px;width:39px;text-align:center;top:479px;">26</div>
<div class="b" style="left:1201px;top:476px;width:39px;height:20px;background:#70a8ea;border-left:1px solid #5aaaf0;border-bottom:1px solid #5aaaf0"></div>
<div class="t " style="left:1201.5px;width:39px;text-align:center;top:479px;">27</div>
<div class="b" style="left:1240px;top:476px;width:39px;height:20px;background:#8cbcf0;border-left:1px solid #5aaaf0;border-bottom:1px solid #5aaaf0"></div>
<div class="t " style="left:1240.5px;width:39px;text-align:center;top:479px;">28</div>
<div class="b" style="left:1279px;top:476px;width:39px;height:20px;background:#8cbcf0;border-left:1px solid #5aaaf0;border-bottom:1px solid #5aaaf0"></div>
<div class="t " style="left:1279.5px;width:39px;text-align:center;top:479px;">29</div>
<div class="b" style="left:1318px;top:476px;width:39px;height:20px;background:#8cbcf0;border-left:1px solid #5aaaf0;border-bottom:1px solid #5aaaf0"></div>
<div class="t " style="left:1318.5px;width:39px;text-align:center;top:479px;">30</div>
<div class="b" style="left:2px;top:496px;width:20px;height:20px;background:linear-gradient(90deg,#f4f4f4,#ebebeb)"></div>
<div class="b" style="left:2px;top:515px;width:20px;height:1px;background:#d5d5d5"></div>
<div class="t " style="left:0.5px;width:20px;text-align:center;top:499px;">3</div>
<div class="b" style="left:22px;top:496px;width:165px;height:20px;background:#e6e6e6"></div>
<div class="b" style="left:22px;top:515px;width:165px;height:1px;background:#d2d2d2"></div>
<div class="b" style="left:85px;top:496px;width:1px;height:20px;background:#d2d2d2"></div>
<div class="t " style="left:25px;top:499px;">1002</div>
<div class="t " style="left:88px;top:499px;">Art Rivers</div>
<div class="b" style="left:187px;top:496px;width:39px;height:20px;background:#9dbde6;border-left:1px solid #8ea6c8;border-bottom:1px solid #8ea6c8"></div>
<div class="t " style="left:187.5px;width:39px;text-align:center;top:499px;">1</div>
<div class="b" style="left:226px;top:496px;width:39px;height:20px;background:#9dbde6;border-left:1px solid #8ea6c8;border-bottom:1px solid #8ea6c8"></div>
<div class="t " style="left:226.5px;width:39px;text-align:center;top:499px;">2</div>
<div class="b" style="left:265px;top:496px;width:39px;height:20px;background:#9dbde6;border-left:1px solid #8ea6c8;border-bottom:1px solid #8ea6c8"></div>
<div class="t " style="left:265.5px;width:39px;text-align:center;top:499px;">3</div>
<div class="b" style="left:304px;top:496px;width:39px;height:20px;background:#9dbde6;border-left:1px solid #8ea6c8;border-bottom:1px solid #8ea6c8"></div>
<div class="t " style="left:304.5px;width:39px;text-align:center;top:499px;">4</div>
<div class="b" style="left:343px;top:496px;width:39px;height:20px;background:#80aae3;border-left:1px solid #8ea6c8;border-bottom:1px solid #8ea6c8"></div>
<div class="t " style="left:343.5px;width:39px;text-align:center;top:499px;">5</div>
<div class="b" style="left:382px;top:496px;width:39px;height:20px;background:#80aae3;border-left:1px solid #8ea6c8;border-bottom:1px solid #8ea6c8"></div>
<div class="t " style="left:382.5px;width:39px;text-align:center;top:499px;">6</div>
<div class="b" style="left:421px;top:496px;width:39px;height:20px;background:#9dbde6;border-left:1px solid #8ea6c8;border-bottom:1px solid #8ea6c8"></div>
<div class="t " style="left:421.5px;width:39px;text-align:center;top:499px;">7</div>
<div class="b" style="left:460px;top:496px;width:39px;height:20px;background:#9dbde6;border-left:1px solid #8ea6c8;border-bottom:1px solid #8ea6c8"></div>
<div class="t " style="left:460.5px;width:39px;text-align:center;top:499px;">8</div>
<div class="b" style="left:499px;top:496px;width:39px;height:20px;background:#9dbde6;border-left:1px solid #8ea6c8;border-bottom:1px solid #8ea6c8"></div>
<div class="t " style="left:499.5px;width:39px;text-align:center;top:499px;">9</div>
<div class="b" style="left:538px;top:496px;width:39px;height:20px;background:#9dbde6;border-left:1px solid #8ea6c8;border-bottom:1px solid #8ea6c8"></div>
<div class="t " style="left:538.5px;width:39px;text-align:center;top:499px;">10</div>
<div class="b" style="left:577px;top:496px;width:39px;height:20px;background:#9dbde6;border-left:1px solid #8ea6c8;border-bottom:1px solid #8ea6c8"></div>
<div class="t " style="left:577.5px;width:39px;text-align:center;top:499px;">11</div>
<div class="b" style="left:616px;top:496px;width:39px;height:20px;background:#80aae3;border-left:1px solid #8ea6c8;border-bottom:1px solid #8ea6c8"></div>
<div class="t " style="left:616.5px;width:39px;text-align:center;top:499px;">12</div>
<div class="b" style="left:655px;top:496px;width:39px;height:20px;background:#80aae3;border-left:1px solid #8ea6c8;border-bottom:1px solid #8ea6c8"></div>
<div class="t " style="left:655.5px;width:39px;text-align:center;top:499px;">13</div>
<div class="b" style="left:694px;top:496px;width:39px;height:20px;background:#9dbde6;border-left:1px solid #8ea6c8;border-bottom:1px solid #8ea6c8"></div>
<div class="t " style="left:694.5px;width:39px;text-align:center;top:499px;">14</div>
<div class="b" style="left:733px;top:496px;width:39px;height:20px;background:#9dbde6;border-left:1px solid #8ea6c8;border-bottom:1px solid #8ea6c8"></div>
<div class="t " style="left:733.5px;width:39px;text-align:center;top:499px;">15</div>
<div class="b" style="left:772px;top:496px;width:39px;height:20px;background:#9dbde6;border-left:1px solid #8ea6c8;border-bottom:1px solid #8ea6c8"></div>
<div class="t " style="left:772.5px;width:39px;text-align:center;top:499px;">16</div>
<div class="b" style="left:811px;top:496px;width:39px;height:20px;background:#9dbde6;border-left:1px solid #8ea6c8;border-bottom:1px solid #8ea6c8"></div>
<div class="t " style="left:811.5px;width:39px;text-align:center;top:499px;">17</div>
<div class="b" style="left:850px;top:496px;width:39px;height:20px;background:#9dbde6;border-left:1px solid #8ea6c8;border-bottom:1px solid #8ea6c8"></div>
<div class="t " style="left:850.5px;width:39px;text-align:center;top:499px;">18</div>
<div class="b" style="left:889px;top:496px;width:39px;height:20px;background:#80aae3;border-left:1px solid #8ea6c8;border-bottom:1px solid #8ea6c8"></div>
<div class="t " style="left:889.5px;width:39px;text-align:center;top:499px;">19</div>
<div class="b" style="left:928px;top:496px;width:39px;height:20px;background:#80aae3;border-left:1px solid #8ea6c8;border-bottom:1px solid #8ea6c8"></div>
<div class="t " style="left:928.5px;width:39px;text-align:center;top:499px;">20</div>
<div class="b" style="left:967px;top:496px;width:39px;height:20px;background:#9dbde6;border-left:1px solid #8ea6c8;border-bottom:1px solid #8ea6c8"></div>
<div class="t " style="left:967.5px;width:39px;text-align:center;top:499px;">21</div>
<div class="b" style="left:1006px;top:496px;width:39px;height:20px;background:#9dbde6;border-left:1px solid #8ea6c8;border-bottom:1px solid #8ea6c8"></div>
<div class="t " style="left:1006.5px;width:39px;text-align:center;top:499px;">22</div>
<div class="b" style="left:1045px;top:496px;width:39px;height:20px;background:#9dbde6;border-left:1px solid #8ea6c8;border-bottom:1px solid #8ea6c8"></div>
<div class="t " style="left:1045.5px;width:39px;text-align:center;top:499px;">23</div>
<div class="b" style="left:1084px;top:496px;width:39px;height:20px;background:#9dbde6;border-left:1px solid #8ea6c8;border-bottom:1px solid #8ea6c8"></div>
<div class="t " style="left:1084.5px;width:39px;text-align:center;top:499px;">24</div>
<div class="b" style="left:1123px;top:496px;width:39px;height:20px;background:#9dbde6;border-left:1px solid #8ea6c8;border-bottom:1px solid #8ea6c8"></div>
<div class="t " style="left:1123.5px;width:39px;text-align:center;top:499px;">25</div>
<div class="b" style="left:1162px;top:496px;width:39px;height:20px;background:#80aae3;border-left:1px solid #8ea6c8;border-bottom:1px solid #8ea6c8"></div>
<div class="t " style="left:1162.5px;width:39px;text-align:center;top:499px;">26</div>
<div class="b" style="left:1201px;top:496px;width:39px;height:20px;background:#80aae3;border-left:1px solid #8ea6c8;border-bottom:1px solid #8ea6c8"></div>
<div class="t " style="left:1201.5px;width:39px;text-align:center;top:499px;">27</div>
<div class="b" style="left:1240px;top:496px;width:39px;height:20px;background:#9dbde6;border-left:1px solid #8ea6c8;border-bottom:1px solid #8ea6c8"></div>
<div class="t " style="left:1240.5px;width:39px;text-align:center;top:499px;">28</div>
<div class="b" style="left:1279px;top:496px;width:39px;height:20px;background:#9dbde6;border-left:1px solid #8ea6c8;border-bottom:1px solid #8ea6c8"></div>
<div class="t " style="left:1279.5px;width:39px;text-align:center;top:499px;">29</div>
<div class="b" style="left:1318px;top:496px;width:39px;height:20px;background:#9dbde6;border-left:1px solid #8ea6c8;border-bottom:1px solid #8ea6c8"></div>
<div class="t " style="left:1318.5px;width:39px;text-align:center;top:499px;">30</div>
<div class="b" style="left:2px;top:516px;width:20px;height:20px;background:linear-gradient(90deg,#f4f4f4,#ebebeb)"></div>
<div class="b" style="left:2px;top:535px;width:20px;height:1px;background:#d5d5d5"></div>
<div class="t " style="left:0.5px;width:20px;text-align:center;top:519px;">4</div>
<div class="b" style="left:22px;top:516px;width:165px;height:20px;background:#e6e6e6"></div>
<div class="b" style="left:22px;top:535px;width:165px;height:1px;background:#d2d2d2"></div>
<div class="b" style="left:85px;top:516px;width:1px;height:20px;background:#d2d2d2"></div>
<div class="t " style="left:25px;top:519px;">1003</div>
<div class="t " style="left:88px;top:519px;">Annie Leonard</div>
<div class="b" style="left:187px;top:516px;width:39px;height:20px;background:#9dbde6;border-left:1px solid #8ea6c8;border-bottom:1px solid #8ea6c8"></div>
<div class="t " style="left:187.5px;width:39px;text-align:center;top:519px;">1</div>
<div class="b" style="left:226px;top:516px;width:39px;height:20px;background:#9dbde6;border-left:1px solid #8ea6c8;border-bottom:1px solid #8ea6c8"></div>
<div class="t " style="left:226.5px;width:39px;text-align:center;top:519px;">2</div>
<div class="b" style="left:265px;top:516px;width:39px;height:20px;background:#9dbde6;border-left:1px solid #8ea6c8;border-bottom:1px solid #8ea6c8"></div>
<div class="t " style="left:265.5px;width:39px;text-align:center;top:519px;">3</div>
<div class="b" style="left:304px;top:516px;width:39px;height:20px;background:#9dbde6;border-left:1px solid #8ea6c8;border-bottom:1px solid #8ea6c8"></div>
<div class="t " style="left:304.5px;width:39px;text-align:center;top:519px;">4</div>
<div class="b" style="left:343px;top:516px;width:39px;height:20px;background:#80aae3;border-left:1px solid #8ea6c8;border-bottom:1px solid #8ea6c8"></div>
<div class="t " style="left:343.5px;width:39px;text-align:center;top:519px;">5</div>
<div class="b" style="left:382px;top:516px;width:39px;height:20px;background:#80aae3;border-left:1px solid #8ea6c8;border-bottom:1px solid #8ea6c8"></div>
<div class="t " style="left:382.5px;width:39px;text-align:center;top:519px;">6</div>
<div class="b" style="left:421px;top:516px;width:39px;height:20px;background:#9dbde6;border-left:1px solid #8ea6c8;border-bottom:1px solid #8ea6c8"></div>
<div class="t " style="left:421.5px;width:39px;text-align:center;top:519px;">7</div>
<div class="b" style="left:460px;top:516px;width:39px;height:20px;background:#9dbde6;border-left:1px solid #8ea6c8;border-bottom:1px solid #8ea6c8"></div>
<div class="t " style="left:460.5px;width:39px;text-align:center;top:519px;">8</div>
<div class="b" style="left:499px;top:516px;width:39px;height:20px;background:#9dbde6;border-left:1px solid #8ea6c8;border-bottom:1px solid #8ea6c8"></div>
<div class="t " style="left:499.5px;width:39px;text-align:center;top:519px;">9</div>
<div class="b" style="left:538px;top:516px;width:39px;height:20px;background:#9dbde6;border-left:1px solid #8ea6c8;border-bottom:1px solid #8ea6c8"></div>
<div class="t " style="left:538.5px;width:39px;text-align:center;top:519px;">10</div>
<div class="b" style="left:577px;top:516px;width:39px;height:20px;background:#9dbde6;border-left:1px solid #8ea6c8;border-bottom:1px solid #8ea6c8"></div>
<div class="t " style="left:577.5px;width:39px;text-align:center;top:519px;">11</div>
<div class="b" style="left:616px;top:516px;width:39px;height:20px;background:#80aae3;border-left:1px solid #8ea6c8;border-bottom:1px solid #8ea6c8"></div>
<div class="t " style="left:616.5px;width:39px;text-align:center;top:519px;">12</div>
<div class="b" style="left:655px;top:516px;width:39px;height:20px;background:#80aae3;border-left:1px solid #8ea6c8;border-bottom:1px solid #8ea6c8"></div>
<div class="t " style="left:655.5px;width:39px;text-align:center;top:519px;">13</div>
<div class="b" style="left:694px;top:516px;width:39px;height:20px;background:#9dbde6;border-left:1px solid #8ea6c8;border-bottom:1px solid #8ea6c8"></div>
<div class="t " style="left:694.5px;width:39px;text-align:center;top:519px;">14</div>
<div class="b" style="left:733px;top:516px;width:39px;height:20px;background:#9dbde6;border-left:1px solid #8ea6c8;border-bottom:1px solid #8ea6c8"></div>
<div class="t " style="left:733.5px;width:39px;text-align:center;top:519px;">15</div>
<div class="b" style="left:772px;top:516px;width:39px;height:20px;background:#9dbde6;border-left:1px solid #8ea6c8;border-bottom:1px solid #8ea6c8"></div>
<div class="t " style="left:772.5px;width:39px;text-align:center;top:519px;">16</div>
<div class="b" style="left:811px;top:516px;width:39px;height:20px;background:#9dbde6;border-left:1px solid #8ea6c8;border-bottom:1px solid #8ea6c8"></div>
<div class="t " style="left:811.5px;width:39px;text-align:center;top:519px;">17</div>
<div class="b" style="left:850px;top:516px;width:39px;height:20px;background:#9dbde6;border-left:1px solid #8ea6c8;border-bottom:1px solid #8ea6c8"></div>
<div class="t " style="left:850.5px;width:39px;text-align:center;top:519px;">18</div>
<div class="b" style="left:889px;top:516px;width:39px;height:20px;background:#80aae3;border-left:1px solid #8ea6c8;border-bottom:1px solid #8ea6c8"></div>
<div class="t " style="left:889.5px;width:39px;text-align:center;top:519px;">19</div>
<div class="b" style="left:928px;top:516px;width:39px;height:20px;background:#80aae3;border-left:1px solid #8ea6c8;border-bottom:1px solid #8ea6c8"></div>
<div class="t " style="left:928.5px;width:39px;text-align:center;top:519px;">20</div>
<div class="b" style="left:967px;top:516px;width:39px;height:20px;background:#9dbde6;border-left:1px solid #8ea6c8;border-bottom:1px solid #8ea6c8"></div>
<div class="t " style="left:967.5px;width:39px;text-align:center;top:519px;">21</div>
<div class="b" style="left:1006px;top:516px;width:39px;height:20px;background:#9dbde6;border-left:1px solid #8ea6c8;border-bottom:1px solid #8ea6c8"></div>
<div class="t " style="left:1006.5px;width:39px;text-align:center;top:519px;">22</div>
<div class="b" style="left:1045px;top:516px;width:39px;height:20px;background:#9dbde6;border-left:1px solid #8ea6c8;border-bottom:1px solid #8ea6c8"></div>
<div class="t " style="left:1045.5px;width:39px;text-align:center;top:519px;">23</div>
<div class="b" style="left:1084px;top:516px;width:39px;height:20px;background:#9dbde6;border-left:1px solid #8ea6c8;border-bottom:1px solid #8ea6c8"></div>
<div class="t " style="left:1084.5px;width:39px;text-align:center;top:519px;">24</div>
<div class="b" style="left:1123px;top:516px;width:39px;height:20px;background:#9dbde6;border-left:1px solid #8ea6c8;border-bottom:1px solid #8ea6c8"></div>
<div class="t " style="left:1123.5px;width:39px;text-align:center;top:519px;">25</div>
<div class="b" style="left:1162px;top:516px;width:39px;height:20px;background:#80aae3;border-left:1px solid #8ea6c8;border-bottom:1px solid #8ea6c8"></div>
<div class="t " style="left:1162.5px;width:39px;text-align:center;top:519px;">26</div>
<div class="b" style="left:1201px;top:516px;width:39px;height:20px;background:#80aae3;border-left:1px solid #8ea6c8;border-bottom:1px solid #8ea6c8"></div>
<div class="t " style="left:1201.5px;width:39px;text-align:center;top:519px;">27</div>
<div class="b" style="left:1240px;top:516px;width:39px;height:20px;background:#9dbde6;border-left:1px solid #8ea6c8;border-bottom:1px solid #8ea6c8"></div>
<div class="t " style="left:1240.5px;width:39px;text-align:center;top:519px;">28</div>
<div class="b" style="left:1279px;top:516px;width:39px;height:20px;background:#9dbde6;border-left:1px solid #8ea6c8;border-bottom:1px solid #8ea6c8"></div>
<div class="t " style="left:1279.5px;width:39px;text-align:center;top:519px;">29</div>
<div class="b" style="left:1318px;top:516px;width:39px;height:20px;background:#9dbde6;border-left:1px solid #8ea6c8;border-bottom:1px solid #8ea6c8"></div>
<div class="t " style="left:1318.5px;width:39px;text-align:center;top:519px;">30</div>
<div class="b" style="left:2px;top:536px;width:20px;height:20px;background:linear-gradient(90deg,#f4f4f4,#ebebeb)"></div>
<div class="b" style="left:2px;top:555px;width:20px;height:1px;background:#d5d5d5"></div>
<div class="t " style="left:0.5px;width:20px;text-align:center;top:539px;">5</div>
<div class="b" style="left:22px;top:536px;width:165px;height:20px;background:#e6e6e6"></div>
<div class="b" style="left:22px;top:555px;width:165px;height:1px;background:#d2d2d2"></div>
<div class="b" style="left:85px;top:536px;width:1px;height:20px;background:#d2d2d2"></div>
<div class="t " style="left:25px;top:539px;">1004</div>
<div class="t " style="left:88px;top:539px;">Fay Miller</div>
<div class="b" style="left:187px;top:536px;width:39px;height:20px;background:#9dbde6;border-left:1px solid #8ea6c8;border-bottom:1px solid #8ea6c8"></div>
<div class="t " style="left:187.5px;width:39px;text-align:center;top:539px;">1</div>
<div class="b" style="left:226px;top:536px;width:39px;height:20px;background:#9dbde6;border-left:1px solid #8ea6c8;border-bottom:1px solid #8ea6c8"></div>
<div class="t " style="left:226.5px;width:39px;text-align:center;top:539px;">2</div>
<div class="b" style="left:265px;top:536px;width:39px;height:20px;background:#9dbde6;border-left:1px solid #8ea6c8;border-bottom:1px solid #8ea6c8"></div>
<div class="t " style="left:265.5px;width:39px;text-align:center;top:539px;">3</div>
<div class="b" style="left:304px;top:536px;width:39px;height:20px;background:#9dbde6;border-left:1px solid #8ea6c8;border-bottom:1px solid #8ea6c8"></div>
<div class="t " style="left:304.5px;width:39px;text-align:center;top:539px;">4</div>
<div class="b" style="left:343px;top:536px;width:39px;height:20px;background:#80aae3;border-left:1px solid #8ea6c8;border-bottom:1px solid #8ea6c8"></div>
<div class="t " style="left:343.5px;width:39px;text-align:center;top:539px;">5</div>
<div class="b" style="left:382px;top:536px;width:39px;height:20px;background:#80aae3;border-left:1px solid #8ea6c8;border-bottom:1px solid #8ea6c8"></div>
<div class="t " style="left:382.5px;width:39px;text-align:center;top:539px;">6</div>
<div class="b" style="left:421px;top:536px;width:39px;height:20px;background:#9dbde6;border-left:1px solid #8ea6c8;border-bottom:1px solid #8ea6c8"></div>
<div class="t " style="left:421.5px;width:39px;text-align:center;top:539px;">7</div>
<div class="b" style="left:460px;top:536px;width:39px;height:20px;background:#9dbde6;border-left:1px solid #8ea6c8;border-bottom:1px solid #8ea6c8"></div>
<div class="t " style="left:460.5px;width:39px;text-align:center;top:539px;">8</div>
<div class="b" style="left:499px;top:536px;width:39px;height:20px;background:#9dbde6;border-left:1px solid #8ea6c8;border-bottom:1px solid #8ea6c8"></div>
<div class="t " style="left:499.5px;width:39px;text-align:center;top:539px;">9</div>
<div class="b" style="left:538px;top:536px;width:39px;height:20px;background:#9dbde6;border-left:1px solid #8ea6c8;border-bottom:1px solid #8ea6c8"></div>
<div class="t " style="left:538.5px;width:39px;text-align:center;top:539px;">10</div>
<div class="b" style="left:577px;top:536px;width:39px;height:20px;background:#9dbde6;border-left:1px solid #8ea6c8;border-bottom:1px solid #8ea6c8"></div>
<div class="t " style="left:577.5px;width:39px;text-align:center;top:539px;">11</div>
<div class="b" style="left:616px;top:536px;width:39px;height:20px;background:#80aae3;border-left:1px solid #8ea6c8;border-bottom:1px solid #8ea6c8"></div>
<div class="t " style="left:616.5px;width:39px;text-align:center;top:539px;">12</div>
<div class="b" style="left:655px;top:536px;width:39px;height:20px;background:#80aae3;border-left:1px solid #8ea6c8;border-bottom:1px solid #8ea6c8"></div>
<div class="t " style="left:655.5px;width:39px;text-align:center;top:539px;">13</div>
<div class="b" style="left:694px;top:536px;width:39px;height:20px;background:#9dbde6;border-left:1px solid #8ea6c8;border-bottom:1px solid #8ea6c8"></div>
<div class="t " style="left:694.5px;width:39px;text-align:center;top:539px;">14</div>
<div class="b" style="left:733px;top:536px;width:39px;height:20px;background:#9dbde6;border-left:1px solid #8ea6c8;border-bottom:1px solid #8ea6c8"></div>
<div class="t " style="left:733.5px;width:39px;text-align:center;top:539px;">15</div>
<div class="b" style="left:772px;top:536px;width:39px;height:20px;background:#9dbde6;border-left:1px solid #8ea6c8;border-bottom:1px solid #8ea6c8"></div>
<div class="t " style="left:772.5px;width:39px;text-align:center;top:539px;">16</div>
<div class="b" style="left:811px;top:536px;width:39px;height:20px;background:#9dbde6;border-left:1px solid #8ea6c8;border-bottom:1px solid #8ea6c8"></div>
<div class="t " style="left:811.5px;width:39px;text-align:center;top:539px;">17</div>
<div class="b" style="left:850px;top:536px;width:39px;height:20px;background:#9dbde6;border-left:1px solid #8ea6c8;border-bottom:1px solid #8ea6c8"></div>
<div class="t " style="left:850.5px;width:39px;text-align:center;top:539px;">18</div>
<div class="b" style="left:889px;top:536px;width:39px;height:20px;background:#80aae3;border-left:1px solid #8ea6c8;border-bottom:1px solid #8ea6c8"></div>
<div class="t " style="left:889.5px;width:39px;text-align:center;top:539px;">19</div>
<div class="b" style="left:928px;top:536px;width:39px;height:20px;background:#80aae3;border-left:1px solid #8ea6c8;border-bottom:1px solid #8ea6c8"></div>
<div class="t " style="left:928.5px;width:39px;text-align:center;top:539px;">20</div>
<div class="b" style="left:967px;top:536px;width:39px;height:20px;background:#9dbde6;border-left:1px solid #8ea6c8;border-bottom:1px solid #8ea6c8"></div>
<div class="t " style="left:967.5px;width:39px;text-align:center;top:539px;">21</div>
<div class="b" style="left:1006px;top:536px;width:39px;height:20px;background:#9dbde6;border-left:1px solid #8ea6c8;border-bottom:1px solid #8ea6c8"></div>
<div class="t " style="left:1006.5px;width:39px;text-align:center;top:539px;">22</div>
<div class="b" style="left:1045px;top:536px;width:39px;height:20px;background:#9dbde6;border-left:1px solid #8ea6c8;border-bottom:1px solid #8ea6c8"></div>
<div class="t " style="left:1045.5px;width:39px;text-align:center;top:539px;">23</div>
<div class="b" style="left:1084px;top:536px;width:39px;height:20px;background:#9dbde6;border-left:1px solid #8ea6c8;border-bottom:1px solid #8ea6c8"></div>
<div class="t " style="left:1084.5px;width:39px;text-align:center;top:539px;">24</div>
<div class="b" style="left:1123px;top:536px;width:39px;height:20px;background:#9dbde6;border-left:1px solid #8ea6c8;border-bottom:1px solid #8ea6c8"></div>
<div class="t " style="left:1123.5px;width:39px;text-align:center;top:539px;">25</div>
<div class="b" style="left:1162px;top:536px;width:39px;height:20px;background:#80aae3;border-left:1px solid #8ea6c8;border-bottom:1px solid #8ea6c8"></div>
<div class="t " style="left:1162.5px;width:39px;text-align:center;top:539px;">26</div>
<div class="b" style="left:1201px;top:536px;width:39px;height:20px;background:#80aae3;border-left:1px solid #8ea6c8;border-bottom:1px solid #8ea6c8"></div>
<div class="t " style="left:1201.5px;width:39px;text-align:center;top:539px;">27</div>
<div class="b" style="left:1240px;top:536px;width:39px;height:20px;background:#86c43e;border-left:1px solid #8ea6c8;border-bottom:1px solid #8ea6c8"></div>
<div class="t " style="left:1240.5px;width:39px;text-align:center;top:539px;">28</div>
<div class="b" style="left:1279px;top:536px;width:39px;height:20px;background:#86c43e;border-left:1px solid #8ea6c8;border-bottom:1px solid #8ea6c8"></div>
<div class="t " style="left:1279.5px;width:39px;text-align:center;top:539px;">29</div>
<div class="b" style="left:1318px;top:536px;width:39px;height:20px;background:#86c43e;border-left:1px solid #8ea6c8;border-bottom:1px solid #8ea6c8"></div>
<div class="t " style="left:1318.5px;width:39px;text-align:center;top:539px;">30</div>
<div class="b" style="left:22px;top:476px;width:1336px;height:20px;border:1px solid #5aaaf0"></div>
<div class="b" style="left:22px;top:476px;width:64px;height:20px;border:2px solid #5aaaf0"></div>
<div class="b" style="left:2px;top:556px;width:20px;height:15px;background:#f0f0f0"></div>
<div class="b" style="left:22px;top:556px;width:1px;height:15px;background:#d5d5d5"></div></body></html>
